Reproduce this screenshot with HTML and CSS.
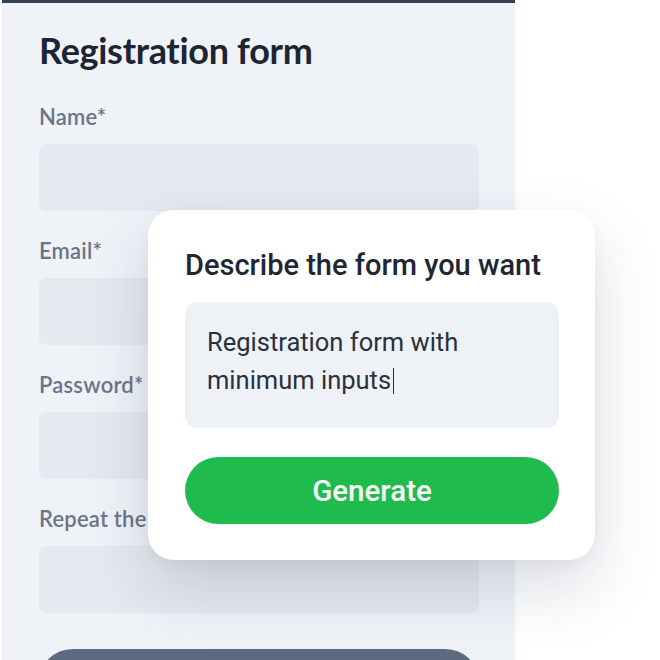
FILE: index.html
```html
<!DOCTYPE html>
<html lang="en">
<head>
<meta charset="utf-8">
<title>Registration form</title>
<link rel="stylesheet" href="styles.css">
</head>
<body>
<div class="stage">
  <section class="form-panel">
    <h1 class="form-title">Registration form</h1>
    <div class="field">
      <label class="field-label">Name*</label>
      <div class="field-input"></div>
    </div>
    <div class="field">
      <label class="field-label">Email*</label>
      <div class="field-input"></div>
    </div>
    <div class="field">
      <label class="field-label">Password*</label>
      <div class="field-input"></div>
    </div>
    <div class="field">
      <label class="field-label">Repeat the password*</label>
      <div class="field-input"></div>
    </div>
    <div class="submit-btn"></div>
  </section>

  <div class="ai-card">
    <h2 class="ai-title">Describe the form you want</h2>
    <div class="ai-textarea">Registration form with minimum inputs<span class="caret"></span></div>
    <div class="ai-btn">Generate</div>
  </div>
</div>
</body>
</html>
```
FILE: styles.css
```css
html, body {
  margin: 0;
  padding: 0;
  background: #ffffff;
}
body {
  width: 660px;
  height: 660px;
  overflow: hidden;
}
.stage {
  position: relative;
  width: 660px;
  height: 660px;
  overflow: hidden;
}
.form-panel {
  margin-left: 2px;
  width: 513px;
  height: 660px;
  overflow: hidden;
  box-sizing: border-box;
  background: #eff3f8;
  border-top: 3px solid #343f52;
  padding: 25px 36px 0 37px;
  font-family: "Lato", "Liberation Sans", sans-serif;
}
.form-title {
  margin: 0 0 33px 0;
  font-size: 36px;
  line-height: 44px;
  font-weight: 700;
  color: #1d2535;
  letter-spacing: -0.3px;
}
.field {
  display: flex;
  flex-direction: column;
  gap: 15px;
  margin-bottom: 28px;
}
.field-label {
  display: block;
  font-size: 22px;
  line-height: 24px;
  font-weight: 600;
  color: #6b7588;
  letter-spacing: 0.2px;
  white-space: nowrap;
}
.field-input {
  height: 67px;
  border-radius: 7px;
  background: #e5e9f0;
}
.submit-btn {
  margin-top: 36px;
  height: 67px;
  flex-shrink: 0;
  border-radius: 34px;
  background: #5d6b80;
}
.ai-card {
  position: absolute;
  left: 148px;
  top: 210px;
  width: 447px;
  height: 350px;
  box-sizing: border-box;
  padding: 35px 36px 36px 37px;
  background: #ffffff;
  border-radius: 26px;
  box-shadow: 0 28px 64px rgba(35, 50, 80, 0.17), 0 4px 14px rgba(35, 50, 80, 0.04);
  font-family: "Roboto", "Liberation Sans", sans-serif;
  display: flex;
  flex-direction: column;
}
.ai-title {
  margin: 0;
  font-size: 29px;
  line-height: 40px;
  font-weight: 500;
  color: #1f2634;
}
.ai-textarea {
  margin-top: 17px;
  height: 126px;
  box-sizing: border-box;
  padding: 21px 22px 0 22px;
  border-radius: 13px;
  background: #eef2f7;
  font-size: 25.5px;
  line-height: 38px;
  color: #2a303d;
}
.caret {
  display: inline-block;
  width: 0;
  height: 26px;
  margin-left: 2px;
  border-left: 1.5px solid #2a303d;
  vertical-align: -5px;
}
.ai-btn {
  margin-top: 29px;
  height: 67px;
  border-radius: 34px;
  background: #1fbb4c;
  color: #ffffff;
  font-size: 29.5px;
  font-weight: 500;
  display: flex;
  align-items: center;
  justify-content: center;
}
```
